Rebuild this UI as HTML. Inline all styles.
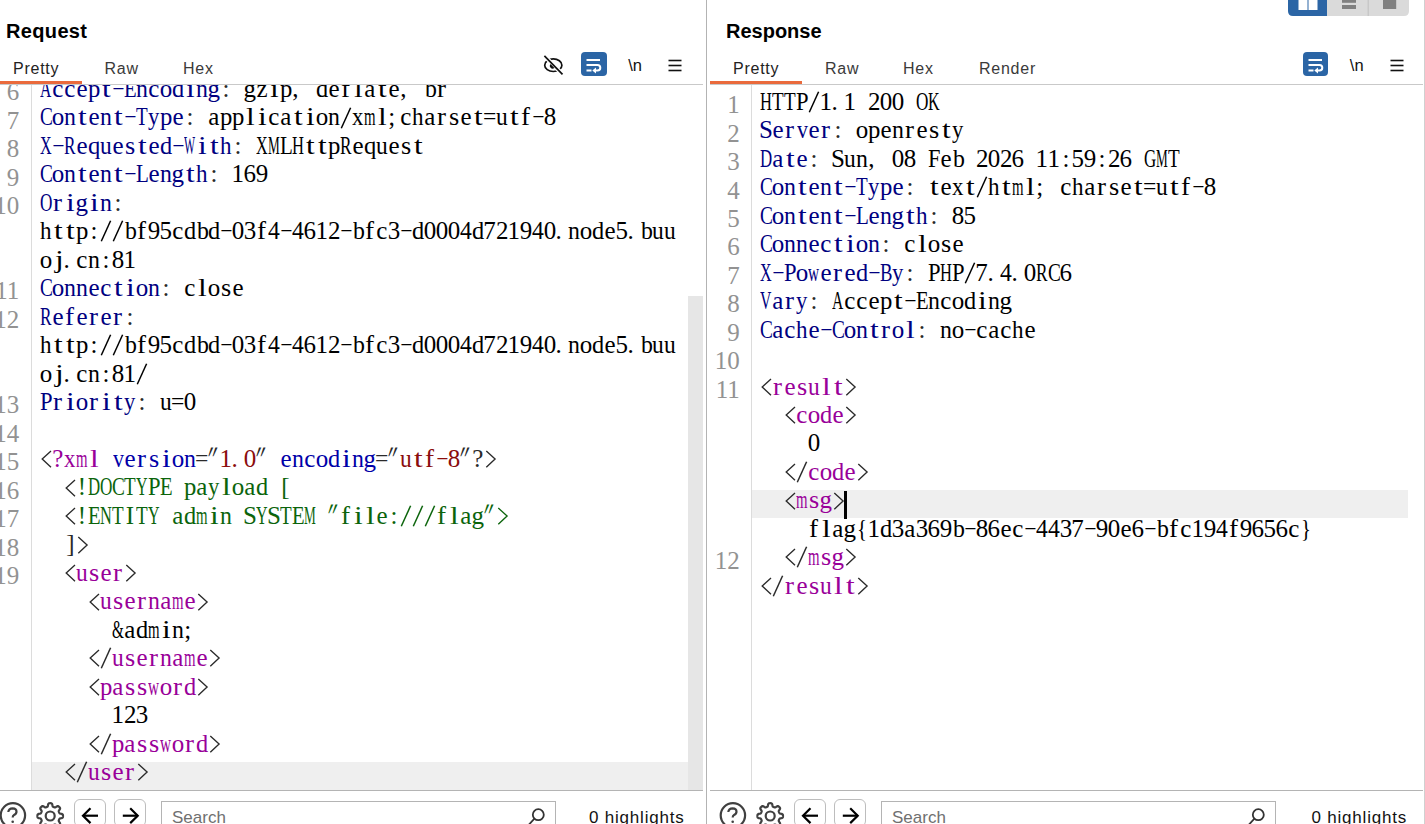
<!DOCTYPE html>
<html><head><meta charset="utf-8"><style>
html,body{margin:0;padding:0;background:#fff;}
body{width:1425px;height:824px;position:relative;overflow:hidden;}
.abs{position:absolute;}
.clip{position:absolute;overflow:hidden;}
.row{position:absolute;white-space:pre;font-family:"Liberation Mono",monospace;font-size:23px;line-height:28.47px;height:28.47px;transform:scaleX(0.8696);transform-origin:0 0;}
.srow{position:absolute;height:28.47px;font-family:"Liberation Serif",serif;font-size:25.0px;line-height:28.47px;}
.srow .ab{position:absolute;overflow:visible;}
.srow i{position:absolute;top:0;font-style:normal;transform-origin:0 22.67px;white-space:pre;}
.num{position:absolute;width:60px;text-align:right;font-family:"Liberation Serif",serif;font-size:25px;line-height:28.47px;color:#929292;}
.title{position:absolute;font-family:"Liberation Sans",sans-serif;font-weight:bold;font-size:20px;line-height:20px;color:#000;}
.title.rq{letter-spacing:0.35px;}
.tab{position:absolute;font-family:"Liberation Sans",sans-serif;font-size:16px;line-height:16px;color:#3a3a3a;letter-spacing:0.75px;top:61px;}
.tab.sel{color:#222;}
.hline{position:absolute;height:1px;background:#c9c9c9;}
.vline{position:absolute;width:1px;background:#b3b3b3;}
.nl{position:absolute;font-family:"Liberation Sans",sans-serif;font-size:16.5px;line-height:16px;color:#111;}
.btn{position:absolute;top:799.2px;width:29px;height:28px;border:1.3px solid #bdbdbd;border-radius:6px;box-sizing:border-box;width:32px;}
.search{position:absolute;top:801.2px;width:395px;height:30px;border:1px solid #b4b4b4;box-sizing:border-box;}
.sph{position:absolute;top:809.2px;font-family:"Liberation Sans",sans-serif;font-size:17px;line-height:17px;color:#707070;letter-spacing:0px;}
.hl{position:absolute;top:809px;font-family:"Liberation Sans",sans-serif;font-size:17px;line-height:17px;color:#111;letter-spacing:0.8px;}
</style></head>
<body>
<div class="title rq" style="left:6px;top:21px">Request</div>
<div class="tab sel" style="left:13px">Pretty</div>
<div class="tab" style="left:104.5px">Raw</div>
<div class="tab" style="left:183px">Hex</div>
<svg class="abs" style="left:543px;top:55px" width="22" height="21" viewBox="0 0 22 21">
<g stroke="#111" stroke-width="1.7" fill="none">
<ellipse cx="10.3" cy="10.2" rx="8.6" ry="6.3"/>
</g>
<path d="M1.4 0.9 L19.5 19.3" stroke="#fff" stroke-width="4.2"/>
<path d="M1.4 0.9 L19.5 19.3" stroke="#111" stroke-width="1.7"/>
<path d="M7.5 9.0 A2.8 2.8 0 0 0 11.4 13.0 Z" fill="#111"/>
</svg>
<svg class="abs" style="left:581px;top:52px" width="26" height="24" viewBox="0 0 26 24">
<rect x="0" y="0" width="26" height="24" rx="4" fill="#2b65a5"/>
<g stroke="#fff" stroke-width="2" fill="none" stroke-linecap="butt">
<line x1="5.5" y1="8" x2="19" y2="8"/>
<path d="M5.5 13 H16.5 A2.8 2.8 0 0 1 16.5 18.6 H13"/>
<line x1="5.5" y1="18.5" x2="10.5" y2="18.5"/>
</g>
<path d="M15 15.6 L11.3 18.6 L15 21.6 Z" fill="#fff"/>
</svg>
<div class="nl" style="left:628.2px;top:57.3px">\n</div>
<svg class="abs" style="left:668px;top:59px" width="14" height="13" viewBox="0 0 14 13">
<g stroke="#111" stroke-width="1.6"><line x1="0.5" y1="1.5" x2="13.5" y2="1.5"/><line x1="0.5" y1="6.5" x2="13.5" y2="6.5"/><line x1="0.5" y1="11.5" x2="13.5" y2="11.5"/></g></svg>
<div class="abs" style="left:32px;top:762px;width:656px;height:28px;background:#efefef"></div>
<div class="vline" style="left:31px;top:85px;height:705px;background:#dcdcdc"></div>
<div class="clip" style="left:0px;top:85px;width:688px;height:705px">
<div class="srow" style="top:-10.10px;left:40px"><span style="color:#000080"><i style="left:0.35px;transform:scaleX(0.624)">A</i><i style="left:12.36px">c</i><i style="left:24.36px">c</i><i style="left:36.40px">e</i><i style="left:48.10px;transform:scaleX(0.989)">p</i><i style="left:61.60px;transform:scaleX(1.250)">t</i><i style="left:71.57px;transform:translateY(-4.20px) scale(1.540,0.680)">-</i><i style="left:83.90px;transform:scaleX(0.827)">E</i><i style="left:95.95px;transform:scaleX(0.953)">n</i><i style="left:108.36px">c</i><i style="left:119.75px">o</i><i style="left:131.62px;transform:scaleX(0.974)">d</i><i style="left:145.63px;transform:scaleX(1.250)">i</i><i style="left:155.95px;transform:scaleX(0.953)">n</i><i style="left:167.45px">g</i></span><span style="color:#2a2a2a"><i style="left:182.55px">:</i></span><span style="color:#000000"><i style="left:203.45px">g</i><i style="left:216.46px">z</i><i style="left:229.63px;transform:scaleX(1.250)">i</i><i style="left:240.10px;transform:scaleX(0.989)">p</i><i style="left:252.19px">,</i><i style="left:275.62px;transform:scaleX(0.974)">d</i><i style="left:288.40px">e</i><i style="left:301.07px;transform:scaleX(1.085)">f</i><i style="left:313.66px;transform:scaleX(1.250)">l</i><i style="left:324.18px">a</i><i style="left:337.60px;transform:scaleX(1.250)">t</i><i style="left:348.40px">e</i><i style="left:360.19px">,</i><i style="left:384.50px;transform:scaleX(0.953)">b</i><i style="left:397.36px;transform:scaleX(1.078)">r</i></span></div>
<div class="num" style="top:-6.80px;left:-40.7px">6</div>
<div class="srow" style="top:18.37px;left:40px"><span style="color:#000080"><i style="left:-0.29px;transform:scaleX(0.771)">C</i><i style="left:11.75px">o</i><i style="left:23.95px;transform:scaleX(0.953)">n</i><i style="left:37.60px;transform:scaleX(1.250)">t</i><i style="left:48.40px">e</i><i style="left:59.95px;transform:scaleX(0.953)">n</i><i style="left:73.60px;transform:scaleX(1.250)">t</i><i style="left:83.57px;transform:translateY(-4.20px) scale(1.540,0.680)">-</i><i style="left:96.16px;transform:scaleX(0.764)">T</i><i style="left:108.22px;transform:scaleX(0.909)">y</i><i style="left:120.10px;transform:scaleX(0.989)">p</i><i style="left:132.40px">e</i></span><span style="color:#2a2a2a"><i style="left:146.55px">:</i></span><span style="color:#000000"><i style="left:168.18px">a</i><i style="left:180.10px;transform:scaleX(0.989)">p</i><i style="left:192.10px;transform:scaleX(0.989)">p</i><i style="left:205.66px;transform:scaleX(1.250)">l</i><i style="left:217.63px;transform:scaleX(1.250)">i</i><i style="left:228.36px">c</i><i style="left:240.18px">a</i><i style="left:253.60px;transform:scaleX(1.250)">t</i><i style="left:265.63px;transform:scaleX(1.250)">i</i><i style="left:275.75px">o</i><i style="left:287.95px;transform:scaleX(0.953)">n</i><svg class="ab" style="left:300.0px;top:5.17px" width="12" height="19"><polyline points="10.6,-1.2 1.3,19.3" fill="none" stroke="#000000" stroke-width="1.5"/></svg><i style="left:312.30px;transform:scaleX(0.919)">x</i><i style="left:324.19px;transform:scaleX(0.594)">m</i><i style="left:337.66px;transform:scaleX(1.250)">l</i><i style="left:348.24px">;</i><i style="left:360.36px">c</i><i style="left:372.27px;transform:scaleX(0.922)">h</i><i style="left:384.18px">a</i><i style="left:397.36px;transform:scaleX(1.078)">r</i><i style="left:408.82px;transform:scaleX(1.051)">s</i><i style="left:420.40px">e</i><i style="left:433.60px;transform:scaleX(1.250)">t</i><i style="left:443.32px;transform:scaleX(0.946)">=</i><i style="left:456.19px;transform:scaleX(0.937)">u</i><i style="left:469.60px;transform:scaleX(1.250)">t</i><i style="left:481.07px;transform:scaleX(1.085)">f</i><i style="left:491.57px;transform:translateY(-4.20px) scale(1.540,0.680)">-</i><i style="left:503.75px">8</i></span></div>
<div class="num" style="top:21.67px;left:-40.7px">7</div>
<div class="srow" style="top:46.84px;left:40px"><span style="color:#000080"><i style="left:0.15px;transform:scaleX(0.645)">X</i><i style="left:11.57px;transform:translateY(-4.20px) scale(1.540,0.680)">-</i><i style="left:24.00px;transform:scaleX(0.691)">R</i><i style="left:36.40px">e</i><i style="left:47.61px;transform:scaleX(0.987)">q</i><i style="left:60.19px;transform:scaleX(0.937)">u</i><i style="left:72.40px">e</i><i style="left:84.82px;transform:scaleX(1.051)">s</i><i style="left:97.60px;transform:scaleX(1.250)">t</i><i style="left:108.40px">e</i><i style="left:119.62px;transform:scaleX(0.974)">d</i><i style="left:131.57px;transform:translateY(-4.20px) scale(1.540,0.680)">-</i><i style="left:144.49px;transform:scaleX(0.468)">W</i><i style="left:157.63px;transform:scaleX(1.250)">i</i><i style="left:169.60px;transform:scaleX(1.250)">t</i><i style="left:180.27px;transform:scaleX(0.922)">h</i></span><span style="color:#2a2a2a"><i style="left:194.55px">:</i></span><span style="color:#000000"><i style="left:216.15px;transform:scaleX(0.645)">X</i><i style="left:228.12px;transform:scaleX(0.529)">M</i><i style="left:239.89px;transform:scaleX(0.843)">L</i><i style="left:252.02px;transform:scaleX(0.663)">H</i><i style="left:265.60px;transform:scaleX(1.250)">t</i><i style="left:277.60px;transform:scaleX(1.250)">t</i><i style="left:288.10px;transform:scaleX(0.989)">p</i><i style="left:300.00px;transform:scaleX(0.691)">R</i><i style="left:312.40px">e</i><i style="left:323.61px;transform:scaleX(0.987)">q</i><i style="left:336.19px;transform:scaleX(0.937)">u</i><i style="left:348.40px">e</i><i style="left:360.82px;transform:scaleX(1.051)">s</i><i style="left:373.60px;transform:scaleX(1.250)">t</i></span></div>
<div class="num" style="top:50.14px;left:-40.7px">8</div>
<div class="srow" style="top:75.31px;left:40px"><span style="color:#000080"><i style="left:-0.29px;transform:scaleX(0.771)">C</i><i style="left:11.75px">o</i><i style="left:23.95px;transform:scaleX(0.953)">n</i><i style="left:37.60px;transform:scaleX(1.250)">t</i><i style="left:48.40px">e</i><i style="left:59.95px;transform:scaleX(0.953)">n</i><i style="left:73.60px;transform:scaleX(1.250)">t</i><i style="left:83.57px;transform:translateY(-4.20px) scale(1.540,0.680)">-</i><i style="left:95.89px;transform:scaleX(0.843)">L</i><i style="left:108.40px">e</i><i style="left:119.95px;transform:scaleX(0.953)">n</i><i style="left:131.45px">g</i><i style="left:145.60px;transform:scaleX(1.250)">t</i><i style="left:156.27px;transform:scaleX(0.922)">h</i></span><span style="color:#2a2a2a"><i style="left:170.55px">:</i></span><span style="color:#000000"><i style="left:191.40px">1</i><i style="left:203.59px">6</i><i style="left:215.86px">9</i></span></div>
<div class="num" style="top:78.61px;left:-40.7px">9</div>
<div class="srow" style="top:103.78px;left:40px"><span style="color:#000080"><i style="left:-0.20px;transform:scaleX(0.687)">O</i><i style="left:13.36px;transform:scaleX(1.078)">r</i><i style="left:25.63px;transform:scaleX(1.250)">i</i><i style="left:35.45px">g</i><i style="left:49.63px;transform:scaleX(1.250)">i</i><i style="left:59.95px;transform:scaleX(0.953)">n</i></span><span style="color:#2a2a2a"><i style="left:74.55px">:</i></span></div>
<div class="num" style="top:107.08px;left:-40.7px">10</div>
<div class="srow" style="top:132.25px;left:40px"><span style="color:#000000"><i style="left:0.27px;transform:scaleX(0.922)">h</i><i style="left:13.60px;transform:scaleX(1.250)">t</i><i style="left:25.60px;transform:scaleX(1.250)">t</i><i style="left:36.10px;transform:scaleX(0.989)">p</i><i style="left:50.55px">:</i><svg class="ab" style="left:60.0px;top:5.17px" width="12" height="19"><polyline points="10.6,-1.2 1.3,19.3" fill="none" stroke="#000000" stroke-width="1.5"/></svg><svg class="ab" style="left:72.0px;top:5.17px" width="12" height="19"><polyline points="10.6,-1.2 1.3,19.3" fill="none" stroke="#000000" stroke-width="1.5"/></svg><i style="left:84.50px;transform:scaleX(0.953)">b</i><i style="left:97.07px;transform:scaleX(1.085)">f</i><i style="left:107.86px">9</i><i style="left:119.51px">5</i><i style="left:132.36px">c</i><i style="left:143.62px;transform:scaleX(0.974)">d</i><i style="left:156.50px;transform:scaleX(0.953)">b</i><i style="left:167.62px;transform:scaleX(0.974)">d</i><i style="left:179.57px;transform:translateY(-4.20px) scale(1.540,0.680)">-</i><i style="left:191.75px">0</i><i style="left:203.64px">3</i><i style="left:217.07px;transform:scaleX(1.085)">f</i><i style="left:228.04px;transform:scaleX(0.947)">4</i><i style="left:239.57px;transform:translateY(-4.20px) scale(1.540,0.680)">-</i><i style="left:252.04px;transform:scaleX(0.947)">4</i><i style="left:263.59px">6</i><i style="left:275.40px">1</i><i style="left:287.89px">2</i><i style="left:299.57px;transform:translateY(-4.20px) scale(1.540,0.680)">-</i><i style="left:312.50px;transform:scaleX(0.953)">b</i><i style="left:325.07px;transform:scaleX(1.085)">f</i><i style="left:336.36px">c</i><i style="left:347.64px">3</i><i style="left:359.57px;transform:translateY(-4.20px) scale(1.540,0.680)">-</i><i style="left:371.62px;transform:scaleX(0.974)">d</i><i style="left:383.75px">0</i><i style="left:395.75px">0</i><i style="left:407.75px">0</i><i style="left:420.04px;transform:scaleX(0.947)">4</i><i style="left:431.62px;transform:scaleX(0.974)">d</i><i style="left:443.29px">7</i><i style="left:455.89px">2</i><i style="left:467.40px">1</i><i style="left:479.86px">9</i><i style="left:492.04px;transform:scaleX(0.947)">4</i><i style="left:503.75px">0</i><i style="left:515.48px">.</i><i style="left:527.95px;transform:scaleX(0.953)">n</i><i style="left:539.75px">o</i><i style="left:551.62px;transform:scaleX(0.974)">d</i><i style="left:564.40px">e</i><i style="left:575.51px">5</i><i style="left:587.48px">.</i><i style="left:600.50px;transform:scaleX(0.953)">b</i><i style="left:612.19px;transform:scaleX(0.937)">u</i><i style="left:624.19px;transform:scaleX(0.937)">u</i></span></div>
<div class="srow" style="top:160.72px;left:40px"><span style="color:#000000"><i style="left:-0.25px">o</i><i style="left:15.45px;transform:scaleX(1.250)">j</i><i style="left:23.48px">.</i><i style="left:36.36px">c</i><i style="left:47.95px;transform:scaleX(0.953)">n</i><i style="left:62.55px">:</i><i style="left:71.75px">8</i><i style="left:83.40px">1</i></span></div>
<div class="srow" style="top:189.19px;left:40px"><span style="color:#000080"><i style="left:-0.29px;transform:scaleX(0.771)">C</i><i style="left:11.75px">o</i><i style="left:23.95px;transform:scaleX(0.953)">n</i><i style="left:35.95px;transform:scaleX(0.953)">n</i><i style="left:48.40px">e</i><i style="left:60.36px">c</i><i style="left:73.60px;transform:scaleX(1.250)">t</i><i style="left:85.63px;transform:scaleX(1.250)">i</i><i style="left:95.75px">o</i><i style="left:107.95px;transform:scaleX(0.953)">n</i></span><span style="color:#2a2a2a"><i style="left:122.55px">:</i></span><span style="color:#000000"><i style="left:144.36px">c</i><i style="left:157.66px;transform:scaleX(1.250)">l</i><i style="left:167.75px">o</i><i style="left:180.82px;transform:scaleX(1.051)">s</i><i style="left:192.40px">e</i></span></div>
<div class="num" style="top:192.49px;left:-40.7px">11</div>
<div class="srow" style="top:217.66px;left:40px"><span style="color:#000080"><i style="left:0.00px;transform:scaleX(0.691)">R</i><i style="left:12.40px">e</i><i style="left:25.07px;transform:scaleX(1.085)">f</i><i style="left:36.40px">e</i><i style="left:49.36px;transform:scaleX(1.078)">r</i><i style="left:60.40px">e</i><i style="left:73.36px;transform:scaleX(1.078)">r</i></span><span style="color:#2a2a2a"><i style="left:86.55px">:</i></span></div>
<div class="num" style="top:220.96px;left:-40.7px">12</div>
<div class="srow" style="top:246.13px;left:40px"><span style="color:#000000"><i style="left:0.27px;transform:scaleX(0.922)">h</i><i style="left:13.60px;transform:scaleX(1.250)">t</i><i style="left:25.60px;transform:scaleX(1.250)">t</i><i style="left:36.10px;transform:scaleX(0.989)">p</i><i style="left:50.55px">:</i><svg class="ab" style="left:60.0px;top:5.17px" width="12" height="19"><polyline points="10.6,-1.2 1.3,19.3" fill="none" stroke="#000000" stroke-width="1.5"/></svg><svg class="ab" style="left:72.0px;top:5.17px" width="12" height="19"><polyline points="10.6,-1.2 1.3,19.3" fill="none" stroke="#000000" stroke-width="1.5"/></svg><i style="left:84.50px;transform:scaleX(0.953)">b</i><i style="left:97.07px;transform:scaleX(1.085)">f</i><i style="left:107.86px">9</i><i style="left:119.51px">5</i><i style="left:132.36px">c</i><i style="left:143.62px;transform:scaleX(0.974)">d</i><i style="left:156.50px;transform:scaleX(0.953)">b</i><i style="left:167.62px;transform:scaleX(0.974)">d</i><i style="left:179.57px;transform:translateY(-4.20px) scale(1.540,0.680)">-</i><i style="left:191.75px">0</i><i style="left:203.64px">3</i><i style="left:217.07px;transform:scaleX(1.085)">f</i><i style="left:228.04px;transform:scaleX(0.947)">4</i><i style="left:239.57px;transform:translateY(-4.20px) scale(1.540,0.680)">-</i><i style="left:252.04px;transform:scaleX(0.947)">4</i><i style="left:263.59px">6</i><i style="left:275.40px">1</i><i style="left:287.89px">2</i><i style="left:299.57px;transform:translateY(-4.20px) scale(1.540,0.680)">-</i><i style="left:312.50px;transform:scaleX(0.953)">b</i><i style="left:325.07px;transform:scaleX(1.085)">f</i><i style="left:336.36px">c</i><i style="left:347.64px">3</i><i style="left:359.57px;transform:translateY(-4.20px) scale(1.540,0.680)">-</i><i style="left:371.62px;transform:scaleX(0.974)">d</i><i style="left:383.75px">0</i><i style="left:395.75px">0</i><i style="left:407.75px">0</i><i style="left:420.04px;transform:scaleX(0.947)">4</i><i style="left:431.62px;transform:scaleX(0.974)">d</i><i style="left:443.29px">7</i><i style="left:455.89px">2</i><i style="left:467.40px">1</i><i style="left:479.86px">9</i><i style="left:492.04px;transform:scaleX(0.947)">4</i><i style="left:503.75px">0</i><i style="left:515.48px">.</i><i style="left:527.95px;transform:scaleX(0.953)">n</i><i style="left:539.75px">o</i><i style="left:551.62px;transform:scaleX(0.974)">d</i><i style="left:564.40px">e</i><i style="left:575.51px">5</i><i style="left:587.48px">.</i><i style="left:600.50px;transform:scaleX(0.953)">b</i><i style="left:612.19px;transform:scaleX(0.937)">u</i><i style="left:624.19px;transform:scaleX(0.937)">u</i></span></div>
<div class="srow" style="top:274.60px;left:40px"><span style="color:#000000"><i style="left:-0.25px">o</i><i style="left:15.45px;transform:scaleX(1.250)">j</i><i style="left:23.48px">.</i><i style="left:36.36px">c</i><i style="left:47.95px;transform:scaleX(0.953)">n</i><i style="left:62.55px">:</i><i style="left:71.75px">8</i><i style="left:83.40px">1</i><svg class="ab" style="left:96.0px;top:5.17px" width="12" height="19"><polyline points="10.6,-1.2 1.3,19.3" fill="none" stroke="#000000" stroke-width="1.5"/></svg></span></div>
<div class="srow" style="top:303.07px;left:40px"><span style="color:#000080"><i style="left:-0.15px;transform:scaleX(0.903)">P</i><i style="left:13.36px;transform:scaleX(1.078)">r</i><i style="left:25.63px;transform:scaleX(1.250)">i</i><i style="left:35.75px">o</i><i style="left:49.36px;transform:scaleX(1.078)">r</i><i style="left:61.63px;transform:scaleX(1.250)">i</i><i style="left:73.60px;transform:scaleX(1.250)">t</i><i style="left:84.22px;transform:scaleX(0.909)">y</i></span><span style="color:#2a2a2a"><i style="left:98.55px">:</i></span><span style="color:#000000"><i style="left:120.19px;transform:scaleX(0.937)">u</i><i style="left:131.32px;transform:scaleX(0.946)">=</i><i style="left:143.75px">0</i></span></div>
<div class="num" style="top:306.37px;left:-40.7px">13</div>
<div class="num" style="top:334.84px;left:-40.7px">14</div>
<div class="srow" style="top:360.01px;left:40px"><span style="color:#2a2a2a"><svg class="ab" style="left:0.0px;top:5.17px" width="12" height="19"><polyline points="11,1.1 2.2,9.1 11,17.3" fill="none" stroke="#2a2a2a" stroke-width="1.35"/></svg></span><span style="color:#990099"><i style="left:12.32px">?</i><i style="left:24.30px;transform:scaleX(0.919)">x</i><i style="left:36.19px;transform:scaleX(0.594)">m</i><i style="left:49.66px;transform:scaleX(1.250)">l</i></span><span style="color:#0000a8"><i style="left:72.50px;transform:scaleX(0.880)">v</i><i style="left:84.40px">e</i><i style="left:97.36px;transform:scaleX(1.078)">r</i><i style="left:108.82px;transform:scaleX(1.051)">s</i><i style="left:121.63px;transform:scaleX(1.250)">i</i><i style="left:131.75px">o</i><i style="left:143.95px;transform:scaleX(0.953)">n</i></span><span style="color:#2a2a2a"><i style="left:155.32px;transform:scaleX(0.946)">=</i><i style="left:163.27px;transform:translateY(5.30px) scale(0.909,1.500) skewX(-22deg)">″</i></span><span style="color:#8b0d0d"><i style="left:179.40px">1</i><i style="left:191.47px">.</i><i style="left:203.75px">0</i></span><span style="color:#2a2a2a"><i style="left:211.27px;transform:translateY(5.30px) scale(0.909,1.500) skewX(-22deg)">″</i></span><span style="color:#0000a8"><i style="left:240.40px">e</i><i style="left:251.95px;transform:scaleX(0.953)">n</i><i style="left:264.36px">c</i><i style="left:275.75px">o</i><i style="left:287.62px;transform:scaleX(0.974)">d</i><i style="left:301.63px;transform:scaleX(1.250)">i</i><i style="left:311.95px;transform:scaleX(0.953)">n</i><i style="left:323.45px">g</i></span><span style="color:#2a2a2a"><i style="left:335.32px;transform:scaleX(0.946)">=</i><i style="left:343.27px;transform:translateY(5.30px) scale(0.909,1.500) skewX(-22deg)">″</i></span><span style="color:#8b0d0d"><i style="left:360.19px;transform:scaleX(0.937)">u</i><i style="left:373.60px;transform:scaleX(1.250)">t</i><i style="left:385.07px;transform:scaleX(1.085)">f</i><i style="left:395.57px;transform:translateY(-4.20px) scale(1.540,0.680)">-</i><i style="left:407.75px">8</i></span><span style="color:#2a2a2a"><i style="left:415.27px;transform:translateY(5.30px) scale(0.909,1.500) skewX(-22deg)">″</i><i style="left:432.32px">?</i><svg class="ab" style="left:444.0px;top:5.17px" width="12" height="19"><polyline points="2.3,1.1 11.1,9.1 2.3,17.3" fill="none" stroke="#2a2a2a" stroke-width="1.35"/></svg></span></div>
<div class="num" style="top:363.31px;left:-40.7px">15</div>
<div class="srow" style="top:388.48px;left:40px"><span style="color:#2a2a2a"><svg class="ab" style="left:24.0px;top:5.17px" width="12" height="19"><polyline points="11,1.1 2.2,9.1 11,17.3" fill="none" stroke="#2a2a2a" stroke-width="1.35"/></svg></span><span style="color:#0b640b"><i style="left:37.85px">!</i><i style="left:48.01px;transform:scaleX(0.673)">D</i><i style="left:59.80px;transform:scaleX(0.687)">O</i><i style="left:71.71px;transform:scaleX(0.771)">C</i><i style="left:84.16px;transform:scaleX(0.764)">T</i><i style="left:96.32px;transform:scaleX(0.642)">Y</i><i style="left:107.85px;transform:scaleX(0.903)">P</i><i style="left:119.90px;transform:scaleX(0.827)">E</i><i style="left:144.10px;transform:scaleX(0.989)">p</i><i style="left:156.18px">a</i><i style="left:168.22px;transform:scaleX(0.909)">y</i><i style="left:181.66px;transform:scaleX(1.250)">l</i><i style="left:191.75px">o</i><i style="left:204.18px">a</i><i style="left:215.62px;transform:scaleX(0.974)">d</i><i style="left:241.36px">[</i></span></div>
<div class="num" style="top:391.78px;left:-40.7px">16</div>
<div class="srow" style="top:416.95px;left:40px"><span style="color:#2a2a2a"><svg class="ab" style="left:24.0px;top:5.17px" width="12" height="19"><polyline points="11,1.1 2.2,9.1 11,17.3" fill="none" stroke="#2a2a2a" stroke-width="1.35"/></svg></span><span style="color:#0b640b"><i style="left:37.85px">!</i><i style="left:47.90px;transform:scaleX(0.827)">E</i><i style="left:60.03px;transform:scaleX(0.656)">N</i><i style="left:72.16px;transform:scaleX(0.764)">T</i><i style="left:85.83px">I</i><i style="left:96.16px;transform:scaleX(0.764)">T</i><i style="left:108.32px;transform:scaleX(0.642)">Y</i><i style="left:132.18px">a</i><i style="left:143.62px;transform:scaleX(0.974)">d</i><i style="left:156.19px;transform:scaleX(0.594)">m</i><i style="left:169.63px;transform:scaleX(1.250)">i</i><i style="left:179.95px;transform:scaleX(0.953)">n</i><i style="left:202.99px">S</i><i style="left:216.32px;transform:scaleX(0.642)">Y</i><i style="left:226.99px">S</i><i style="left:240.16px;transform:scaleX(0.764)">T</i><i style="left:251.90px;transform:scaleX(0.827)">E</i><i style="left:264.12px;transform:scaleX(0.529)">M</i><i style="left:283.27px;transform:translateY(5.30px) scale(0.909,1.500) skewX(-22deg)">″</i><i style="left:301.07px;transform:scaleX(1.085)">f</i><i style="left:313.63px;transform:scaleX(1.250)">i</i><i style="left:325.66px;transform:scaleX(1.250)">l</i><i style="left:336.40px">e</i><i style="left:350.55px">:</i><svg class="ab" style="left:360.0px;top:5.17px" width="12" height="19"><polyline points="10.6,-1.2 1.3,19.3" fill="none" stroke="#0b640b" stroke-width="1.5"/></svg><svg class="ab" style="left:372.0px;top:5.17px" width="12" height="19"><polyline points="10.6,-1.2 1.3,19.3" fill="none" stroke="#0b640b" stroke-width="1.5"/></svg><svg class="ab" style="left:384.0px;top:5.17px" width="12" height="19"><polyline points="10.6,-1.2 1.3,19.3" fill="none" stroke="#0b640b" stroke-width="1.5"/></svg><i style="left:397.07px;transform:scaleX(1.085)">f</i><i style="left:409.66px;transform:scaleX(1.250)">l</i><i style="left:420.18px">a</i><i style="left:431.45px">g</i><i style="left:439.27px;transform:translateY(5.30px) scale(0.909,1.500) skewX(-22deg)">″</i><svg class="ab" style="left:456.0px;top:5.17px" width="12" height="19"><polyline points="2.3,1.1 11.1,9.1 2.3,17.3" fill="none" stroke="#0b640b" stroke-width="1.35"/></svg></span></div>
<div class="num" style="top:420.25px;left:-40.7px">17</div>
<div class="srow" style="top:445.42px;left:40px"><span style="color:#2a2a2a"><i style="left:26.31px">]</i><svg class="ab" style="left:36.0px;top:5.17px" width="12" height="19"><polyline points="2.3,1.1 11.1,9.1 2.3,17.3" fill="none" stroke="#2a2a2a" stroke-width="1.35"/></svg></span></div>
<div class="num" style="top:448.72px;left:-40.7px">18</div>
<div class="srow" style="top:473.89px;left:40px"><span style="color:#2a2a2a"><svg class="ab" style="left:24.0px;top:5.17px" width="12" height="19"><polyline points="11,1.1 2.2,9.1 11,17.3" fill="none" stroke="#2a2a2a" stroke-width="1.35"/></svg></span><span style="color:#990099"><i style="left:36.19px;transform:scaleX(0.937)">u</i><i style="left:48.82px;transform:scaleX(1.051)">s</i><i style="left:60.40px">e</i><i style="left:73.36px;transform:scaleX(1.078)">r</i></span><span style="color:#2a2a2a"><svg class="ab" style="left:84.0px;top:5.17px" width="12" height="19"><polyline points="2.3,1.1 11.1,9.1 2.3,17.3" fill="none" stroke="#2a2a2a" stroke-width="1.35"/></svg></span></div>
<div class="num" style="top:477.19px;left:-40.7px">19</div>
<div class="srow" style="top:502.36px;left:40px"><span style="color:#2a2a2a"><svg class="ab" style="left:48.0px;top:5.17px" width="12" height="19"><polyline points="11,1.1 2.2,9.1 11,17.3" fill="none" stroke="#2a2a2a" stroke-width="1.35"/></svg></span><span style="color:#990099"><i style="left:60.19px;transform:scaleX(0.937)">u</i><i style="left:72.82px;transform:scaleX(1.051)">s</i><i style="left:84.40px">e</i><i style="left:97.36px;transform:scaleX(1.078)">r</i><i style="left:107.95px;transform:scaleX(0.953)">n</i><i style="left:120.18px">a</i><i style="left:132.19px;transform:scaleX(0.594)">m</i><i style="left:144.40px">e</i></span><span style="color:#2a2a2a"><svg class="ab" style="left:156.0px;top:5.17px" width="12" height="19"><polyline points="2.3,1.1 11.1,9.1 2.3,17.3" fill="none" stroke="#2a2a2a" stroke-width="1.35"/></svg></span></div>
<div class="srow" style="top:530.83px;left:40px"><span style="color:#000000"><i style="left:71.92px;transform:scaleX(0.610)">&amp;</i><i style="left:84.18px">a</i><i style="left:95.62px;transform:scaleX(0.974)">d</i><i style="left:108.19px;transform:scaleX(0.594)">m</i><i style="left:121.63px;transform:scaleX(1.250)">i</i><i style="left:131.95px;transform:scaleX(0.953)">n</i><i style="left:144.24px">;</i></span></div>
<div class="srow" style="top:559.30px;left:40px"><span style="color:#2a2a2a"><svg class="ab" style="left:48.0px;top:5.17px" width="12" height="19"><polyline points="11,1.1 2.2,9.1 11,17.3" fill="none" stroke="#2a2a2a" stroke-width="1.35"/></svg><svg class="ab" style="left:60.0px;top:5.17px" width="12" height="19"><polyline points="10.6,-1.2 1.3,19.3" fill="none" stroke="#2a2a2a" stroke-width="1.5"/></svg></span><span style="color:#990099"><i style="left:72.19px;transform:scaleX(0.937)">u</i><i style="left:84.82px;transform:scaleX(1.051)">s</i><i style="left:96.40px">e</i><i style="left:109.36px;transform:scaleX(1.078)">r</i><i style="left:119.95px;transform:scaleX(0.953)">n</i><i style="left:132.18px">a</i><i style="left:144.19px;transform:scaleX(0.594)">m</i><i style="left:156.40px">e</i></span><span style="color:#2a2a2a"><svg class="ab" style="left:168.0px;top:5.17px" width="12" height="19"><polyline points="2.3,1.1 11.1,9.1 2.3,17.3" fill="none" stroke="#2a2a2a" stroke-width="1.35"/></svg></span></div>
<div class="srow" style="top:587.77px;left:40px"><span style="color:#2a2a2a"><svg class="ab" style="left:48.0px;top:5.17px" width="12" height="19"><polyline points="11,1.1 2.2,9.1 11,17.3" fill="none" stroke="#2a2a2a" stroke-width="1.35"/></svg></span><span style="color:#990099"><i style="left:60.10px;transform:scaleX(0.989)">p</i><i style="left:72.18px">a</i><i style="left:84.82px;transform:scaleX(1.051)">s</i><i style="left:96.82px;transform:scaleX(1.051)">s</i><i style="left:108.49px;transform:scaleX(0.614)">w</i><i style="left:119.75px">o</i><i style="left:133.36px;transform:scaleX(1.078)">r</i><i style="left:143.62px;transform:scaleX(0.974)">d</i></span><span style="color:#2a2a2a"><svg class="ab" style="left:156.0px;top:5.17px" width="12" height="19"><polyline points="2.3,1.1 11.1,9.1 2.3,17.3" fill="none" stroke="#2a2a2a" stroke-width="1.35"/></svg></span></div>
<div class="srow" style="top:616.24px;left:40px"><span style="color:#000000"><i style="left:71.40px">1</i><i style="left:83.89px">2</i><i style="left:95.64px">3</i></span></div>
<div class="srow" style="top:644.71px;left:40px"><span style="color:#2a2a2a"><svg class="ab" style="left:48.0px;top:5.17px" width="12" height="19"><polyline points="11,1.1 2.2,9.1 11,17.3" fill="none" stroke="#2a2a2a" stroke-width="1.35"/></svg><svg class="ab" style="left:60.0px;top:5.17px" width="12" height="19"><polyline points="10.6,-1.2 1.3,19.3" fill="none" stroke="#2a2a2a" stroke-width="1.5"/></svg></span><span style="color:#990099"><i style="left:72.10px;transform:scaleX(0.989)">p</i><i style="left:84.18px">a</i><i style="left:96.82px;transform:scaleX(1.051)">s</i><i style="left:108.82px;transform:scaleX(1.051)">s</i><i style="left:120.49px;transform:scaleX(0.614)">w</i><i style="left:131.75px">o</i><i style="left:145.36px;transform:scaleX(1.078)">r</i><i style="left:155.62px;transform:scaleX(0.974)">d</i></span><span style="color:#2a2a2a"><svg class="ab" style="left:168.0px;top:5.17px" width="12" height="19"><polyline points="2.3,1.1 11.1,9.1 2.3,17.3" fill="none" stroke="#2a2a2a" stroke-width="1.35"/></svg></span></div>
<div class="srow" style="top:673.18px;left:40px"><span style="color:#2a2a2a"><svg class="ab" style="left:24.0px;top:5.17px" width="12" height="19"><polyline points="11,1.1 2.2,9.1 11,17.3" fill="none" stroke="#2a2a2a" stroke-width="1.35"/></svg><svg class="ab" style="left:36.0px;top:5.17px" width="12" height="19"><polyline points="10.6,-1.2 1.3,19.3" fill="none" stroke="#2a2a2a" stroke-width="1.5"/></svg></span><span style="color:#990099"><i style="left:48.19px;transform:scaleX(0.937)">u</i><i style="left:60.82px;transform:scaleX(1.051)">s</i><i style="left:72.40px">e</i><i style="left:85.36px;transform:scaleX(1.078)">r</i></span><span style="color:#2a2a2a"><svg class="ab" style="left:96.0px;top:5.17px" width="12" height="19"><polyline points="2.3,1.1 11.1,9.1 2.3,17.3" fill="none" stroke="#2a2a2a" stroke-width="1.35"/></svg></span></div>
</div>
<div class="abs" style="left:688px;top:296px;width:15px;height:494px;background:#e6e6e6"></div>
<div class="hline" style="left:0;top:84px;width:703px"></div>
<div class="abs" style="left:0;top:81px;width:82px;height:3px;background:#ea6a3c"></div>
<div class="hline" style="left:0;top:790px;width:703px;background:#b4b4b4"></div>
<div class="vline" style="left:706px;top:0;height:824px"></div>
<div class="title" style="left:726px;top:21px">Response</div>
<div class="tab sel" style="left:733px">Pretty</div>
<div class="tab" style="left:825px">Raw</div>
<div class="tab" style="left:903px">Hex</div>
<div class="tab" style="left:979px">Render</div>
<svg class="abs" style="left:1303px;top:52px" width="25" height="24" viewBox="0 0 25 24">
<rect x="0" y="0" width="25" height="24" rx="4" fill="#2b65a5"/>
<g stroke="#fff" stroke-width="2" fill="none" stroke-linecap="butt">
<line x1="5.5" y1="8" x2="19" y2="8"/>
<path d="M5.5 13 H16.5 A2.8 2.8 0 0 1 16.5 18.6 H13"/>
<line x1="5.5" y1="18.5" x2="10.5" y2="18.5"/>
</g>
<path d="M15 15.6 L11.3 18.6 L15 21.6 Z" fill="#fff"/>
</svg>
<div class="nl" style="left:1349.8px;top:57.3px">\n</div>
<svg class="abs" style="left:1389.5px;top:59px" width="14" height="13" viewBox="0 0 14 13">
<g stroke="#111" stroke-width="1.6"><line x1="0.5" y1="1.5" x2="13.5" y2="1.5"/><line x1="0.5" y1="6.5" x2="13.5" y2="6.5"/><line x1="0.5" y1="11.5" x2="13.5" y2="11.5"/></g></svg>
<div class="abs" style="left:752px;top:490px;width:656px;height:28px;background:#efefef"></div>
<div class="vline" style="left:751px;top:85px;height:705px;background:#dcdcdc"></div>
<div class="clip" style="left:707px;top:85px;width:716px;height:705px">
<div class="srow" style="top:2.80px;left:53px"><span style="color:#000000"><i style="left:0.02px;transform:scaleX(0.663)">H</i><i style="left:12.16px;transform:scaleX(0.764)">T</i><i style="left:24.16px;transform:scaleX(0.764)">T</i><i style="left:35.85px;transform:scaleX(0.903)">P</i><svg class="ab" style="left:48.0px;top:5.17px" width="12" height="19"><polyline points="10.6,-1.2 1.3,19.3" fill="none" stroke="#000000" stroke-width="1.5"/></svg><i style="left:59.40px">1</i><i style="left:71.47px">.</i><i style="left:83.40px">1</i><i style="left:107.89px">2</i><i style="left:119.75px">0</i><i style="left:131.75px">0</i><i style="left:155.80px;transform:scaleX(0.687)">O</i><i style="left:168.04px;transform:scaleX(0.644)">K</i></span></div>
<div class="num" style="top:6.10px;left:-27.200000000000045px">1</div>
<div class="srow" style="top:31.27px;left:53px"><span style="color:#000080"><i style="left:-1.01px">S</i><i style="left:12.40px">e</i><i style="left:25.36px;transform:scaleX(1.078)">r</i><i style="left:36.50px;transform:scaleX(0.880)">v</i><i style="left:48.40px">e</i><i style="left:61.36px;transform:scaleX(1.078)">r</i></span><span style="color:#2a2a2a"><i style="left:74.55px">:</i></span><span style="color:#000000"><i style="left:95.75px">o</i><i style="left:108.10px;transform:scaleX(0.989)">p</i><i style="left:120.40px">e</i><i style="left:131.95px;transform:scaleX(0.953)">n</i><i style="left:145.36px;transform:scaleX(1.078)">r</i><i style="left:156.40px">e</i><i style="left:168.82px;transform:scaleX(1.051)">s</i><i style="left:181.60px;transform:scaleX(1.250)">t</i><i style="left:192.22px;transform:scaleX(0.909)">y</i></span></div>
<div class="num" style="top:34.57px;left:-27.200000000000045px">2</div>
<div class="srow" style="top:59.74px;left:53px"><span style="color:#000080"><i style="left:0.01px;transform:scaleX(0.673)">D</i><i style="left:12.18px">a</i><i style="left:25.60px;transform:scaleX(1.250)">t</i><i style="left:36.40px">e</i></span><span style="color:#2a2a2a"><i style="left:50.55px">:</i></span><span style="color:#000000"><i style="left:70.99px">S</i><i style="left:84.19px;transform:scaleX(0.937)">u</i><i style="left:95.95px;transform:scaleX(0.953)">n</i><i style="left:108.19px">,</i><i style="left:131.75px">0</i><i style="left:143.75px">8</i><i style="left:167.85px;transform:scaleX(0.896)">F</i><i style="left:180.40px">e</i><i style="left:192.50px;transform:scaleX(0.953)">b</i><i style="left:215.89px">2</i><i style="left:227.75px">0</i><i style="left:239.89px">2</i><i style="left:251.59px">6</i><i style="left:275.40px">1</i><i style="left:287.40px">1</i><i style="left:302.55px">:</i><i style="left:311.51px">5</i><i style="left:323.86px">9</i><i style="left:338.55px">:</i><i style="left:347.89px">2</i><i style="left:359.59px">6</i><i style="left:383.81px;transform:scaleX(0.677)">G</i><i style="left:396.12px;transform:scaleX(0.529)">M</i><i style="left:408.16px;transform:scaleX(0.764)">T</i></span></div>
<div class="num" style="top:63.04px;left:-27.200000000000045px">3</div>
<div class="srow" style="top:88.21px;left:53px"><span style="color:#000080"><i style="left:-0.29px;transform:scaleX(0.771)">C</i><i style="left:11.75px">o</i><i style="left:23.95px;transform:scaleX(0.953)">n</i><i style="left:37.60px;transform:scaleX(1.250)">t</i><i style="left:48.40px">e</i><i style="left:59.95px;transform:scaleX(0.953)">n</i><i style="left:73.60px;transform:scaleX(1.250)">t</i><i style="left:83.57px;transform:translateY(-4.20px) scale(1.540,0.680)">-</i><i style="left:96.16px;transform:scaleX(0.764)">T</i><i style="left:108.22px;transform:scaleX(0.909)">y</i><i style="left:120.10px;transform:scaleX(0.989)">p</i><i style="left:132.40px">e</i></span><span style="color:#2a2a2a"><i style="left:146.55px">:</i></span><span style="color:#000000"><i style="left:169.60px;transform:scaleX(1.250)">t</i><i style="left:180.40px">e</i><i style="left:192.30px;transform:scaleX(0.919)">x</i><i style="left:205.60px;transform:scaleX(1.250)">t</i><svg class="ab" style="left:216.0px;top:5.17px" width="12" height="19"><polyline points="10.6,-1.2 1.3,19.3" fill="none" stroke="#000000" stroke-width="1.5"/></svg><i style="left:228.27px;transform:scaleX(0.922)">h</i><i style="left:241.60px;transform:scaleX(1.250)">t</i><i style="left:252.19px;transform:scaleX(0.594)">m</i><i style="left:265.66px;transform:scaleX(1.250)">l</i><i style="left:276.24px">;</i><i style="left:300.36px">c</i><i style="left:312.27px;transform:scaleX(0.922)">h</i><i style="left:324.18px">a</i><i style="left:337.36px;transform:scaleX(1.078)">r</i><i style="left:348.82px;transform:scaleX(1.051)">s</i><i style="left:360.40px">e</i><i style="left:373.60px;transform:scaleX(1.250)">t</i><i style="left:383.32px;transform:scaleX(0.946)">=</i><i style="left:396.19px;transform:scaleX(0.937)">u</i><i style="left:409.60px;transform:scaleX(1.250)">t</i><i style="left:421.07px;transform:scaleX(1.085)">f</i><i style="left:431.57px;transform:translateY(-4.20px) scale(1.540,0.680)">-</i><i style="left:443.75px">8</i></span></div>
<div class="num" style="top:91.51px;left:-27.200000000000045px">4</div>
<div class="srow" style="top:116.68px;left:53px"><span style="color:#000080"><i style="left:-0.29px;transform:scaleX(0.771)">C</i><i style="left:11.75px">o</i><i style="left:23.95px;transform:scaleX(0.953)">n</i><i style="left:37.60px;transform:scaleX(1.250)">t</i><i style="left:48.40px">e</i><i style="left:59.95px;transform:scaleX(0.953)">n</i><i style="left:73.60px;transform:scaleX(1.250)">t</i><i style="left:83.57px;transform:translateY(-4.20px) scale(1.540,0.680)">-</i><i style="left:95.89px;transform:scaleX(0.843)">L</i><i style="left:108.40px">e</i><i style="left:119.95px;transform:scaleX(0.953)">n</i><i style="left:131.45px">g</i><i style="left:145.60px;transform:scaleX(1.250)">t</i><i style="left:156.27px;transform:scaleX(0.922)">h</i></span><span style="color:#2a2a2a"><i style="left:170.55px">:</i></span><span style="color:#000000"><i style="left:191.75px">8</i><i style="left:203.51px">5</i></span></div>
<div class="num" style="top:119.98px;left:-27.200000000000045px">5</div>
<div class="srow" style="top:145.15px;left:53px"><span style="color:#000080"><i style="left:-0.29px;transform:scaleX(0.771)">C</i><i style="left:11.75px">o</i><i style="left:23.95px;transform:scaleX(0.953)">n</i><i style="left:35.95px;transform:scaleX(0.953)">n</i><i style="left:48.40px">e</i><i style="left:60.36px">c</i><i style="left:73.60px;transform:scaleX(1.250)">t</i><i style="left:85.63px;transform:scaleX(1.250)">i</i><i style="left:95.75px">o</i><i style="left:107.95px;transform:scaleX(0.953)">n</i></span><span style="color:#2a2a2a"><i style="left:122.55px">:</i></span><span style="color:#000000"><i style="left:144.36px">c</i><i style="left:157.66px;transform:scaleX(1.250)">l</i><i style="left:167.75px">o</i><i style="left:180.82px;transform:scaleX(1.051)">s</i><i style="left:192.40px">e</i></span></div>
<div class="num" style="top:148.45px;left:-27.200000000000045px">6</div>
<div class="srow" style="top:173.62px;left:53px"><span style="color:#000080"><i style="left:0.15px;transform:scaleX(0.645)">X</i><i style="left:11.57px;transform:translateY(-4.20px) scale(1.540,0.680)">-</i><i style="left:23.85px;transform:scaleX(0.903)">P</i><i style="left:35.75px">o</i><i style="left:48.49px;transform:scaleX(0.614)">w</i><i style="left:60.40px">e</i><i style="left:73.36px;transform:scaleX(1.078)">r</i><i style="left:84.40px">e</i><i style="left:95.62px;transform:scaleX(0.974)">d</i><i style="left:107.57px;transform:translateY(-4.20px) scale(1.540,0.680)">-</i><i style="left:119.96px;transform:scaleX(0.747)">B</i><i style="left:132.22px;transform:scaleX(0.909)">y</i></span><span style="color:#2a2a2a"><i style="left:146.55px">:</i></span><span style="color:#000000"><i style="left:167.85px;transform:scaleX(0.903)">P</i><i style="left:180.02px;transform:scaleX(0.663)">H</i><i style="left:191.85px;transform:scaleX(0.903)">P</i><svg class="ab" style="left:204.0px;top:5.17px" width="12" height="19"><polyline points="10.6,-1.2 1.3,19.3" fill="none" stroke="#000000" stroke-width="1.5"/></svg><i style="left:215.29px">7</i><i style="left:227.47px">.</i><i style="left:240.04px;transform:scaleX(0.947)">4</i><i style="left:251.47px">.</i><i style="left:263.75px">0</i><i style="left:276.00px;transform:scaleX(0.691)">R</i><i style="left:287.71px;transform:scaleX(0.771)">C</i><i style="left:299.59px">6</i></span></div>
<div class="num" style="top:176.92px;left:-27.200000000000045px">7</div>
<div class="srow" style="top:202.09px;left:53px"><span style="color:#000080"><i style="left:0.32px;transform:scaleX(0.629)">V</i><i style="left:12.18px">a</i><i style="left:25.36px;transform:scaleX(1.078)">r</i><i style="left:36.22px;transform:scaleX(0.909)">y</i></span><span style="color:#2a2a2a"><i style="left:50.55px">:</i></span><span style="color:#000000"><i style="left:72.35px;transform:scaleX(0.624)">A</i><i style="left:84.36px">c</i><i style="left:96.36px">c</i><i style="left:108.40px">e</i><i style="left:120.10px;transform:scaleX(0.989)">p</i><i style="left:133.60px;transform:scaleX(1.250)">t</i><i style="left:143.57px;transform:translateY(-4.20px) scale(1.540,0.680)">-</i><i style="left:155.90px;transform:scaleX(0.827)">E</i><i style="left:167.95px;transform:scaleX(0.953)">n</i><i style="left:180.36px">c</i><i style="left:191.75px">o</i><i style="left:203.62px;transform:scaleX(0.974)">d</i><i style="left:217.63px;transform:scaleX(1.250)">i</i><i style="left:227.95px;transform:scaleX(0.953)">n</i><i style="left:239.45px">g</i></span></div>
<div class="num" style="top:205.39px;left:-27.200000000000045px">8</div>
<div class="srow" style="top:230.56px;left:53px"><span style="color:#000080"><i style="left:-0.29px;transform:scaleX(0.771)">C</i><i style="left:12.18px">a</i><i style="left:24.36px">c</i><i style="left:36.27px;transform:scaleX(0.922)">h</i><i style="left:48.40px">e</i><i style="left:59.57px;transform:translateY(-4.20px) scale(1.540,0.680)">-</i><i style="left:71.71px;transform:scaleX(0.771)">C</i><i style="left:83.75px">o</i><i style="left:95.95px;transform:scaleX(0.953)">n</i><i style="left:109.60px;transform:scaleX(1.250)">t</i><i style="left:121.36px;transform:scaleX(1.078)">r</i><i style="left:131.75px">o</i><i style="left:145.66px;transform:scaleX(1.250)">l</i></span><span style="color:#2a2a2a"><i style="left:158.55px">:</i></span><span style="color:#000000"><i style="left:179.95px;transform:scaleX(0.953)">n</i><i style="left:191.75px">o</i><i style="left:203.57px;transform:translateY(-4.20px) scale(1.540,0.680)">-</i><i style="left:216.36px">c</i><i style="left:228.18px">a</i><i style="left:240.36px">c</i><i style="left:252.27px;transform:scaleX(0.922)">h</i><i style="left:264.40px">e</i></span></div>
<div class="num" style="top:233.86px;left:-27.200000000000045px">9</div>
<div class="num" style="top:262.33px;left:-27.200000000000045px">10</div>
<div class="srow" style="top:287.50px;left:53px"><span style="color:#2a2a2a"><svg class="ab" style="left:0.0px;top:5.17px" width="12" height="19"><polyline points="11,1.1 2.2,9.1 11,17.3" fill="none" stroke="#2a2a2a" stroke-width="1.35"/></svg></span><span style="color:#990099"><i style="left:13.36px;transform:scaleX(1.078)">r</i><i style="left:24.40px">e</i><i style="left:36.82px;transform:scaleX(1.051)">s</i><i style="left:48.19px;transform:scaleX(0.937)">u</i><i style="left:61.66px;transform:scaleX(1.250)">l</i><i style="left:73.60px;transform:scaleX(1.250)">t</i></span><span style="color:#2a2a2a"><svg class="ab" style="left:84.0px;top:5.17px" width="12" height="19"><polyline points="2.3,1.1 11.1,9.1 2.3,17.3" fill="none" stroke="#2a2a2a" stroke-width="1.35"/></svg></span></div>
<div class="num" style="top:290.80px;left:-27.200000000000045px">11</div>
<div class="srow" style="top:315.97px;left:53px"><span style="color:#2a2a2a"><svg class="ab" style="left:24.0px;top:5.17px" width="12" height="19"><polyline points="11,1.1 2.2,9.1 11,17.3" fill="none" stroke="#2a2a2a" stroke-width="1.35"/></svg></span><span style="color:#990099"><i style="left:36.36px">c</i><i style="left:47.75px">o</i><i style="left:59.62px;transform:scaleX(0.974)">d</i><i style="left:72.40px">e</i></span><span style="color:#2a2a2a"><svg class="ab" style="left:84.0px;top:5.17px" width="12" height="19"><polyline points="2.3,1.1 11.1,9.1 2.3,17.3" fill="none" stroke="#2a2a2a" stroke-width="1.35"/></svg></span></div>
<div class="srow" style="top:344.44px;left:53px"><span style="color:#000000"><i style="left:47.75px">0</i></span></div>
<div class="srow" style="top:372.91px;left:53px"><span style="color:#2a2a2a"><svg class="ab" style="left:24.0px;top:5.17px" width="12" height="19"><polyline points="11,1.1 2.2,9.1 11,17.3" fill="none" stroke="#2a2a2a" stroke-width="1.35"/></svg><svg class="ab" style="left:36.0px;top:5.17px" width="12" height="19"><polyline points="10.6,-1.2 1.3,19.3" fill="none" stroke="#2a2a2a" stroke-width="1.5"/></svg></span><span style="color:#990099"><i style="left:48.36px">c</i><i style="left:59.75px">o</i><i style="left:71.62px;transform:scaleX(0.974)">d</i><i style="left:84.40px">e</i></span><span style="color:#2a2a2a"><svg class="ab" style="left:96.0px;top:5.17px" width="12" height="19"><polyline points="2.3,1.1 11.1,9.1 2.3,17.3" fill="none" stroke="#2a2a2a" stroke-width="1.35"/></svg></span></div>
<div class="srow" style="top:401.38px;left:53px"><span style="color:#2a2a2a"><svg class="ab" style="left:24.0px;top:5.17px" width="12" height="19"><polyline points="11,1.1 2.2,9.1 11,17.3" fill="none" stroke="#2a2a2a" stroke-width="1.35"/></svg></span><span style="color:#990099"><i style="left:36.19px;transform:scaleX(0.594)">m</i><i style="left:48.82px;transform:scaleX(1.051)">s</i><i style="left:59.45px">g</i></span><span style="color:#2a2a2a"><svg class="ab" style="left:72.0px;top:5.17px" width="12" height="19"><polyline points="2.3,1.1 11.1,9.1 2.3,17.3" fill="none" stroke="#2a2a2a" stroke-width="1.35"/></svg></span></div>
<div class="srow" style="top:429.85px;left:53px"><span style="color:#000000"><i style="left:49.07px;transform:scaleX(1.085)">f</i><i style="left:61.66px;transform:scaleX(1.250)">l</i><i style="left:72.18px">a</i><i style="left:83.45px">g</i><i style="left:97.01px;transform:scaleX(0.831)">{</i><i style="left:107.40px">1</i><i style="left:119.62px;transform:scaleX(0.974)">d</i><i style="left:131.64px">3</i><i style="left:144.18px">a</i><i style="left:155.64px">3</i><i style="left:167.59px">6</i><i style="left:179.86px">9</i><i style="left:192.50px;transform:scaleX(0.953)">b</i><i style="left:203.57px;transform:translateY(-4.20px) scale(1.540,0.680)">-</i><i style="left:215.75px">8</i><i style="left:227.59px">6</i><i style="left:240.40px">e</i><i style="left:252.36px">c</i><i style="left:263.57px;transform:translateY(-4.20px) scale(1.540,0.680)">-</i><i style="left:276.04px;transform:scaleX(0.947)">4</i><i style="left:288.04px;transform:scaleX(0.947)">4</i><i style="left:299.64px">3</i><i style="left:311.29px">7</i><i style="left:323.57px;transform:translateY(-4.20px) scale(1.540,0.680)">-</i><i style="left:335.86px">9</i><i style="left:347.75px">0</i><i style="left:360.40px">e</i><i style="left:371.59px">6</i><i style="left:383.57px;transform:translateY(-4.20px) scale(1.540,0.680)">-</i><i style="left:396.50px;transform:scaleX(0.953)">b</i><i style="left:409.07px;transform:scaleX(1.085)">f</i><i style="left:420.36px">c</i><i style="left:431.40px">1</i><i style="left:443.86px">9</i><i style="left:456.04px;transform:scaleX(0.947)">4</i><i style="left:469.07px;transform:scaleX(1.085)">f</i><i style="left:479.86px">9</i><i style="left:491.59px">6</i><i style="left:503.51px">5</i><i style="left:515.59px">6</i><i style="left:528.36px">c</i><i style="left:541.01px;transform:scaleX(0.831)">}</i></span></div>
<div class="srow" style="top:458.32px;left:53px"><span style="color:#2a2a2a"><svg class="ab" style="left:24.0px;top:5.17px" width="12" height="19"><polyline points="11,1.1 2.2,9.1 11,17.3" fill="none" stroke="#2a2a2a" stroke-width="1.35"/></svg><svg class="ab" style="left:36.0px;top:5.17px" width="12" height="19"><polyline points="10.6,-1.2 1.3,19.3" fill="none" stroke="#2a2a2a" stroke-width="1.5"/></svg></span><span style="color:#990099"><i style="left:48.19px;transform:scaleX(0.594)">m</i><i style="left:60.82px;transform:scaleX(1.051)">s</i><i style="left:71.45px">g</i></span><span style="color:#2a2a2a"><svg class="ab" style="left:84.0px;top:5.17px" width="12" height="19"><polyline points="2.3,1.1 11.1,9.1 2.3,17.3" fill="none" stroke="#2a2a2a" stroke-width="1.35"/></svg></span></div>
<div class="num" style="top:461.62px;left:-27.200000000000045px">12</div>
<div class="srow" style="top:486.79px;left:53px"><span style="color:#2a2a2a"><svg class="ab" style="left:0.0px;top:5.17px" width="12" height="19"><polyline points="11,1.1 2.2,9.1 11,17.3" fill="none" stroke="#2a2a2a" stroke-width="1.35"/></svg><svg class="ab" style="left:12.0px;top:5.17px" width="12" height="19"><polyline points="10.6,-1.2 1.3,19.3" fill="none" stroke="#2a2a2a" stroke-width="1.5"/></svg></span><span style="color:#990099"><i style="left:25.36px;transform:scaleX(1.078)">r</i><i style="left:36.40px">e</i><i style="left:48.82px;transform:scaleX(1.051)">s</i><i style="left:60.19px;transform:scaleX(0.937)">u</i><i style="left:73.66px;transform:scaleX(1.250)">l</i><i style="left:85.60px;transform:scaleX(1.250)">t</i></span><span style="color:#2a2a2a"><svg class="ab" style="left:96.0px;top:5.17px" width="12" height="19"><polyline points="2.3,1.1 11.1,9.1 2.3,17.3" fill="none" stroke="#2a2a2a" stroke-width="1.35"/></svg></span></div>
</div>
<div class="abs" style="left:844px;top:490.5px;width:3px;height:28px;background:#000"></div>
<div class="hline" style="left:710px;top:84px;width:713px"></div>
<div class="abs" style="left:710px;top:81px;width:92px;height:3px;background:#ea6a3c"></div>
<div class="hline" style="left:710px;top:790px;width:713px;background:#b4b4b4"></div>
<div class="vline" style="left:1423.5px;top:0;height:824px;background:#d0d0d0"></div>
<svg class="abs" style="left:1288px;top:0" width="122" height="17" viewBox="0 0 122 17">
<path d="M0 0 H39 V16 H5 Q0 16 0 11 Z" fill="#2b65a5"/>
<path d="M39 0 H121 V11 Q121 16 116 16 H39 Z" fill="#dadada"/>
<rect x="79.5" y="0" width="1.5" height="16" fill="#c8c8c8"/>
<rect x="10.5" y="0" width="9" height="10" fill="#fff"/>
<rect x="20.5" y="0" width="9" height="10" fill="#fff"/>
<rect x="54" y="0" width="14" height="2.8" fill="#808080"/>
<rect x="54" y="5" width="14" height="4" fill="#808080"/>
<rect x="95" y="0" width="13.2" height="9" fill="#808080"/>
</svg>

<svg class="abs" style="left:-2px;top:800px" width="30" height="30" viewBox="0 0 30 30">
<circle cx="14.9" cy="15.35" r="12.2" stroke="#404040" stroke-width="2.2" fill="none"/>
<path d="M10.3 12.0 Q10.7 8.3 14.6 8.3 Q18.5 8.4 18.5 11.7 Q18.5 13.9 16.0 15.0 Q14.7 15.7 14.7 17.6" stroke="#404040" stroke-width="2.2" fill="none"/>
<circle cx="14.7" cy="21.7" r="1.3" fill="#404040"/>
</svg>
<svg class="abs" style="left:36.3px;top:802px" width="30" height="30" viewBox="0 0 30 30">
<path d="M14.20 1.20 L14.53 1.21 L14.87 1.24 L15.20 1.29 L15.52 1.39 L15.83 1.59 L16.10 1.98 L16.31 2.62 L16.45 3.41 L16.59 4.05 L16.76 4.45 L16.96 4.68 L17.18 4.82 L17.41 4.93 L17.64 5.03 L17.87 5.13 L18.11 5.23 L18.34 5.32 L18.58 5.40 L18.84 5.45 L19.14 5.44 L19.55 5.28 L20.10 4.92 L20.75 4.46 L21.35 4.15 L21.82 4.07 L22.18 4.15 L22.48 4.31 L22.75 4.50 L23.01 4.72 L23.25 4.95 L23.48 5.19 L23.70 5.45 L23.89 5.72 L24.05 6.02 L24.13 6.38 L24.05 6.85 L23.74 7.45 L23.28 8.10 L22.92 8.65 L22.76 9.06 L22.75 9.36 L22.80 9.62 L22.88 9.86 L22.97 10.09 L23.07 10.33 L23.17 10.56 L23.27 10.79 L23.38 11.02 L23.52 11.24 L23.75 11.44 L24.15 11.61 L24.79 11.75 L25.58 11.89 L26.22 12.10 L26.61 12.37 L26.81 12.68 L26.91 13.00 L26.96 13.33 L26.99 13.67 L27.00 14.00 L26.99 14.33 L26.96 14.67 L26.91 15.00 L26.81 15.32 L26.61 15.63 L26.22 15.90 L25.58 16.11 L24.79 16.25 L24.15 16.39 L23.75 16.56 L23.52 16.76 L23.38 16.98 L23.27 17.21 L23.17 17.44 L23.07 17.67 L22.97 17.91 L22.88 18.14 L22.80 18.38 L22.75 18.64 L22.76 18.94 L22.92 19.35 L23.28 19.90 L23.74 20.55 L24.05 21.15 L24.13 21.62 L24.05 21.98 L23.89 22.28 L23.70 22.55 L23.48 22.81 L23.25 23.05 L23.01 23.28 L22.75 23.50 L22.48 23.69 L22.18 23.85 L21.82 23.93 L21.35 23.85 L20.75 23.54 L20.10 23.08 L19.55 22.72 L19.14 22.56 L18.84 22.55 L18.58 22.60 L18.34 22.68 L18.11 22.77 L17.87 22.87 L17.64 22.97 L17.41 23.07 L17.18 23.18 L16.96 23.32 L16.76 23.55 L16.59 23.95 L16.45 24.59 L16.31 25.38 L16.10 26.02 L15.83 26.41 L15.52 26.61 L15.20 26.71 L14.87 26.76 L14.53 26.79 L14.20 26.80 L13.87 26.79 L13.53 26.76 L13.20 26.71 L12.88 26.61 L12.57 26.41 L12.30 26.02 L12.09 25.38 L11.95 24.59 L11.81 23.95 L11.64 23.55 L11.44 23.32 L11.22 23.18 L10.99 23.07 L10.76 22.97 L10.53 22.87 L10.29 22.77 L10.06 22.68 L9.82 22.60 L9.56 22.55 L9.26 22.56 L8.85 22.72 L8.30 23.08 L7.65 23.54 L7.05 23.85 L6.58 23.93 L6.22 23.85 L5.92 23.69 L5.65 23.50 L5.39 23.28 L5.15 23.05 L4.92 22.81 L4.70 22.55 L4.51 22.28 L4.35 21.98 L4.27 21.62 L4.35 21.15 L4.66 20.55 L5.12 19.90 L5.48 19.35 L5.64 18.94 L5.65 18.64 L5.60 18.38 L5.52 18.14 L5.43 17.91 L5.33 17.67 L5.23 17.44 L5.13 17.21 L5.02 16.98 L4.88 16.76 L4.65 16.56 L4.25 16.39 L3.61 16.25 L2.82 16.11 L2.18 15.90 L1.79 15.63 L1.59 15.32 L1.49 15.00 L1.44 14.67 L1.41 14.33 L1.40 14.00 L1.41 13.67 L1.44 13.33 L1.49 13.00 L1.59 12.68 L1.79 12.37 L2.18 12.10 L2.82 11.89 L3.61 11.75 L4.25 11.61 L4.65 11.44 L4.88 11.24 L5.02 11.02 L5.13 10.79 L5.23 10.56 L5.33 10.33 L5.43 10.09 L5.52 9.86 L5.60 9.62 L5.65 9.36 L5.64 9.06 L5.48 8.65 L5.12 8.10 L4.66 7.45 L4.35 6.85 L4.27 6.38 L4.35 6.02 L4.51 5.72 L4.70 5.45 L4.92 5.19 L5.15 4.95 L5.39 4.72 L5.65 4.50 L5.92 4.31 L6.22 4.15 L6.58 4.07 L7.05 4.15 L7.65 4.46 L8.30 4.92 L8.85 5.28 L9.26 5.44 L9.56 5.45 L9.82 5.40 L10.06 5.32 L10.29 5.23 L10.53 5.13 L10.76 5.03 L10.99 4.93 L11.22 4.82 L11.44 4.68 L11.64 4.45 L11.81 4.05 L11.95 3.41 L12.09 2.62 L12.30 1.98 L12.57 1.59 L12.88 1.39 L13.20 1.29 L13.53 1.24 L13.87 1.21 Z" stroke="#404040" stroke-width="2.2" fill="none" stroke-linejoin="round"/>
<circle cx="14.2" cy="14" r="4.5" stroke="#404040" stroke-width="2.2" fill="none"/>
</svg>
<div class="btn" style="left:74px"></div>
<div class="btn" style="left:113.5px"></div>
<svg class="abs" style="left:74px;top:799px" width="32" height="26" viewBox="0 0 32 26">
<g stroke="#000" stroke-width="2.2" fill="none"><line x1="9" y1="16.7" x2="24" y2="16.7"/><polyline points="16.5,9.3 9,16.7 16.5,24.1"/></g></svg>
<svg class="abs" style="left:113.5px;top:799px" width="32" height="26" viewBox="0 0 32 26">
<g stroke="#000" stroke-width="2.2" fill="none"><line x1="8.8" y1="16.7" x2="23.7" y2="16.7"/><polyline points="16.2,9.3 23.7,16.7 16.2,24.1"/></g></svg>
<div class="search" style="left:161px"></div>
<div class="sph" style="left:172px">Search</div>
<svg class="abs" style="left:527px;top:806.5px" width="20" height="20" viewBox="0 0 20 20">
<g stroke="#333" stroke-width="1.8" fill="none"><circle cx="11.3" cy="7.7" r="5.5"/><line x1="7.4" y1="11.6" x2="2" y2="17.5"/></g></svg>
<div class="hl" style="left:589px">0 highlights</div>


<svg class="abs" style="left:718px;top:800px" width="30" height="30" viewBox="0 0 30 30">
<circle cx="14.9" cy="15.35" r="12.2" stroke="#404040" stroke-width="2.2" fill="none"/>
<path d="M10.3 12.0 Q10.7 8.3 14.6 8.3 Q18.5 8.4 18.5 11.7 Q18.5 13.9 16.0 15.0 Q14.7 15.7 14.7 17.6" stroke="#404040" stroke-width="2.2" fill="none"/>
<circle cx="14.7" cy="21.7" r="1.3" fill="#404040"/>
</svg>
<svg class="abs" style="left:756.3px;top:802px" width="30" height="30" viewBox="0 0 30 30">
<path d="M14.20 1.20 L14.53 1.21 L14.87 1.24 L15.20 1.29 L15.52 1.39 L15.83 1.59 L16.10 1.98 L16.31 2.62 L16.45 3.41 L16.59 4.05 L16.76 4.45 L16.96 4.68 L17.18 4.82 L17.41 4.93 L17.64 5.03 L17.87 5.13 L18.11 5.23 L18.34 5.32 L18.58 5.40 L18.84 5.45 L19.14 5.44 L19.55 5.28 L20.10 4.92 L20.75 4.46 L21.35 4.15 L21.82 4.07 L22.18 4.15 L22.48 4.31 L22.75 4.50 L23.01 4.72 L23.25 4.95 L23.48 5.19 L23.70 5.45 L23.89 5.72 L24.05 6.02 L24.13 6.38 L24.05 6.85 L23.74 7.45 L23.28 8.10 L22.92 8.65 L22.76 9.06 L22.75 9.36 L22.80 9.62 L22.88 9.86 L22.97 10.09 L23.07 10.33 L23.17 10.56 L23.27 10.79 L23.38 11.02 L23.52 11.24 L23.75 11.44 L24.15 11.61 L24.79 11.75 L25.58 11.89 L26.22 12.10 L26.61 12.37 L26.81 12.68 L26.91 13.00 L26.96 13.33 L26.99 13.67 L27.00 14.00 L26.99 14.33 L26.96 14.67 L26.91 15.00 L26.81 15.32 L26.61 15.63 L26.22 15.90 L25.58 16.11 L24.79 16.25 L24.15 16.39 L23.75 16.56 L23.52 16.76 L23.38 16.98 L23.27 17.21 L23.17 17.44 L23.07 17.67 L22.97 17.91 L22.88 18.14 L22.80 18.38 L22.75 18.64 L22.76 18.94 L22.92 19.35 L23.28 19.90 L23.74 20.55 L24.05 21.15 L24.13 21.62 L24.05 21.98 L23.89 22.28 L23.70 22.55 L23.48 22.81 L23.25 23.05 L23.01 23.28 L22.75 23.50 L22.48 23.69 L22.18 23.85 L21.82 23.93 L21.35 23.85 L20.75 23.54 L20.10 23.08 L19.55 22.72 L19.14 22.56 L18.84 22.55 L18.58 22.60 L18.34 22.68 L18.11 22.77 L17.87 22.87 L17.64 22.97 L17.41 23.07 L17.18 23.18 L16.96 23.32 L16.76 23.55 L16.59 23.95 L16.45 24.59 L16.31 25.38 L16.10 26.02 L15.83 26.41 L15.52 26.61 L15.20 26.71 L14.87 26.76 L14.53 26.79 L14.20 26.80 L13.87 26.79 L13.53 26.76 L13.20 26.71 L12.88 26.61 L12.57 26.41 L12.30 26.02 L12.09 25.38 L11.95 24.59 L11.81 23.95 L11.64 23.55 L11.44 23.32 L11.22 23.18 L10.99 23.07 L10.76 22.97 L10.53 22.87 L10.29 22.77 L10.06 22.68 L9.82 22.60 L9.56 22.55 L9.26 22.56 L8.85 22.72 L8.30 23.08 L7.65 23.54 L7.05 23.85 L6.58 23.93 L6.22 23.85 L5.92 23.69 L5.65 23.50 L5.39 23.28 L5.15 23.05 L4.92 22.81 L4.70 22.55 L4.51 22.28 L4.35 21.98 L4.27 21.62 L4.35 21.15 L4.66 20.55 L5.12 19.90 L5.48 19.35 L5.64 18.94 L5.65 18.64 L5.60 18.38 L5.52 18.14 L5.43 17.91 L5.33 17.67 L5.23 17.44 L5.13 17.21 L5.02 16.98 L4.88 16.76 L4.65 16.56 L4.25 16.39 L3.61 16.25 L2.82 16.11 L2.18 15.90 L1.79 15.63 L1.59 15.32 L1.49 15.00 L1.44 14.67 L1.41 14.33 L1.40 14.00 L1.41 13.67 L1.44 13.33 L1.49 13.00 L1.59 12.68 L1.79 12.37 L2.18 12.10 L2.82 11.89 L3.61 11.75 L4.25 11.61 L4.65 11.44 L4.88 11.24 L5.02 11.02 L5.13 10.79 L5.23 10.56 L5.33 10.33 L5.43 10.09 L5.52 9.86 L5.60 9.62 L5.65 9.36 L5.64 9.06 L5.48 8.65 L5.12 8.10 L4.66 7.45 L4.35 6.85 L4.27 6.38 L4.35 6.02 L4.51 5.72 L4.70 5.45 L4.92 5.19 L5.15 4.95 L5.39 4.72 L5.65 4.50 L5.92 4.31 L6.22 4.15 L6.58 4.07 L7.05 4.15 L7.65 4.46 L8.30 4.92 L8.85 5.28 L9.26 5.44 L9.56 5.45 L9.82 5.40 L10.06 5.32 L10.29 5.23 L10.53 5.13 L10.76 5.03 L10.99 4.93 L11.22 4.82 L11.44 4.68 L11.64 4.45 L11.81 4.05 L11.95 3.41 L12.09 2.62 L12.30 1.98 L12.57 1.59 L12.88 1.39 L13.20 1.29 L13.53 1.24 L13.87 1.21 Z" stroke="#404040" stroke-width="2.2" fill="none" stroke-linejoin="round"/>
<circle cx="14.2" cy="14" r="4.5" stroke="#404040" stroke-width="2.2" fill="none"/>
</svg>
<div class="btn" style="left:794px"></div>
<div class="btn" style="left:833.5px"></div>
<svg class="abs" style="left:794px;top:799px" width="32" height="26" viewBox="0 0 32 26">
<g stroke="#000" stroke-width="2.2" fill="none"><line x1="9" y1="16.7" x2="24" y2="16.7"/><polyline points="16.5,9.3 9,16.7 16.5,24.1"/></g></svg>
<svg class="abs" style="left:833.5px;top:799px" width="32" height="26" viewBox="0 0 32 26">
<g stroke="#000" stroke-width="2.2" fill="none"><line x1="8.8" y1="16.7" x2="23.7" y2="16.7"/><polyline points="16.2,9.3 23.7,16.7 16.2,24.1"/></g></svg>
<div class="search" style="left:881px"></div>
<div class="sph" style="left:892px">Search</div>
<svg class="abs" style="left:1247px;top:806.5px" width="20" height="20" viewBox="0 0 20 20">
<g stroke="#333" stroke-width="1.8" fill="none"><circle cx="11.3" cy="7.7" r="5.5"/><line x1="7.4" y1="11.6" x2="2" y2="17.5"/></g></svg>
<div class="hl" style="left:1311.5px">0 highlights</div>

</body></html>
